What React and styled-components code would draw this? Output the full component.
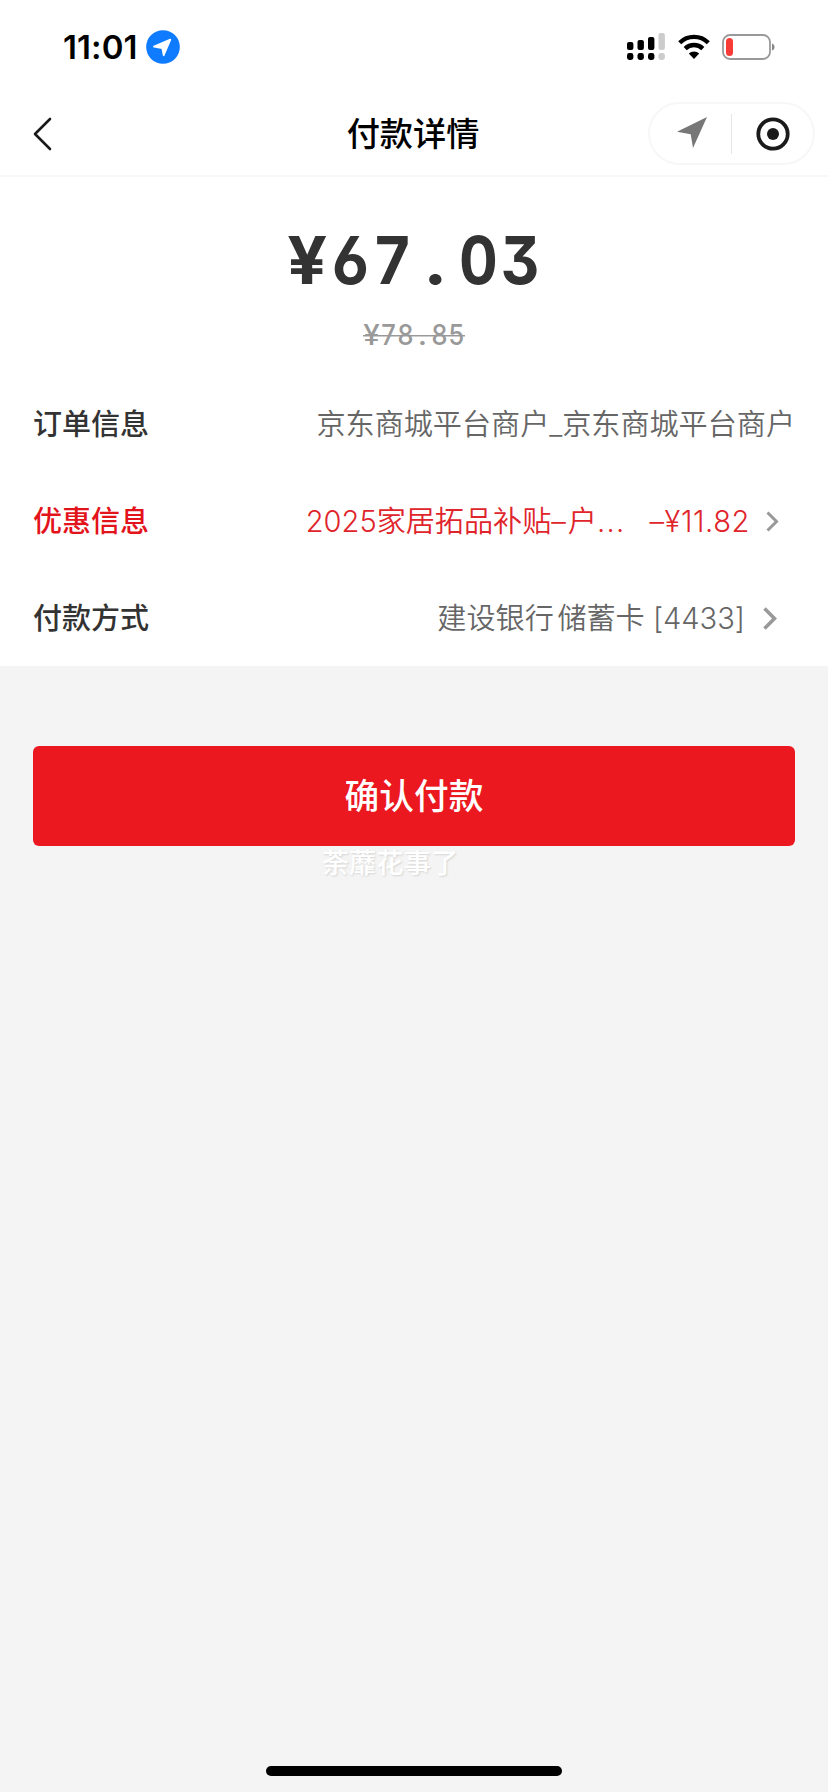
import React from "react";
import styled, { createGlobalStyle } from "styled-components";

const Global = createGlobalStyle`
  * { box-sizing: border-box; }
  body { margin: 0; background: #f4f4f4; font-family: Inter, "Noto Sans CJK SC", sans-serif; }
`;

const Screen = styled.div`
  width: 828px;
  height: 1792px;
  display: flex;
  flex-direction: column;
  background: #f4f4f4;
  overflow: hidden;
`;

const StatusBar = styled.header`
  height: 88px;
  flex: none;
  display: flex;
  align-items: center;
  justify-content: space-between;
  padding: 6px 53px 0 63px;
  background: #fff;
`;

const StatusGroup = styled.div`
  display: flex;
  align-items: center;
  gap: ${(p) => p.$gap}px;
`;

const Clock = styled.span`
  width: 77px;
  font-size: 33px;
  line-height: 40px;
  font-weight: 600;
  letter-spacing: 0.1px;
  color: #000;
`;

const NavBar = styled.nav`
  height: 89px;
  flex: none;
  display: grid;
  grid-template-columns: 180px 1fr 180px;
  align-items: center;
  padding: 4px 13px 0 33px;
  background: #fff;
  border-bottom: 2px solid #f8f8f8;
`;

const Title = styled.h1`
  margin: 0;
  padding: 1px 22px 0 0;
  text-align: center;
  white-space: nowrap;
  font-size: 33.2px;
  line-height: 48px;
  font-weight: 500;
  color: #000;
`;

const Capsule = styled.div`
  justify-self: end;
  width: 167px;
  height: 63px;
  border: 2px solid #f7f7f7;
  border-radius: 32px;
  display: grid;
  grid-template-columns: 1fr 1px 1fr;
  place-items: center;
`;

const CapsuleDivider = styled.span`
  width: 1px;
  height: 40px;
  background: #e6e6e6;
`;

const Details = styled.main`
  height: 489px;
  flex: none;
  background: #fff;
  padding: 47px 33px 0;
  display: flex;
  flex-direction: column;
`;

const Amount = styled.div`
  align-self: center;
  display: flex;
  height: 72px;
  line-height: 72px;
  font-size: 66px;
  font-weight: 750;
  font-feature-settings: "cv09", "cv03", "tnum";
  color: #333;
`;

const OldAmount = styled(Amount)`
  height: 36px;
  line-height: 36px;
  margin-top: 21px;
  font-size: 28px;
  font-weight: 550;
  color: #999;
  background: linear-gradient(#999, #999) 0 18px / 100% 1.5px no-repeat;
`;

const Digit = styled.span`
  width: ${(p) => p.$pitch}px;
  display: flex;
  justify-content: center;
  transform: scaleX(${(p) => p.$stretch});
`;

const Rows = styled.div`
  margin-top: 23px;
`;

const Row = styled.div`
  height: 97px;
  display: flex;
  align-items: center;
  justify-content: space-between;
  padding-right: ${(p) => p.$inset || 0}px;
  font-size: 29px;
  color: ${(p) => (p.$accent ? "#e0242b" : "#666")};
`;

const Label = styled.span`
  padding-bottom: 5px;
  font-weight: 500;
  color: ${(p) => (p.$accent ? "#e3131b" : "#333")};
`;

const Value = styled.span`
  display: flex;
  align-items: center;
`;

const ValueText = styled.span`
  padding-bottom: 5px;
  white-space: pre;
  font-size: 29.1px;
  font-weight: 350;
  font-feature-settings: "calt" 0;
`;

const Bank = styled.span`
  word-spacing: -4.5px;
`;

const Dash = styled.span`
  letter-spacing: 2px;
`;

const Ellipsis = styled.span`
  letter-spacing: 1.3px;
`;

const Discount = styled.span`
  margin-left: 24px;
  letter-spacing: 0.6px;
`;

const Action = styled.section`
  flex: 1;
  display: flex;
  flex-direction: column;
  align-items: center;
  padding: 80px 33px 0;
`;

const ConfirmButton = styled.button`
  width: 100%;
  height: 100px;
  border: 0;
  border-radius: 6px;
  background: #eb1820;
  color: #fff;
  font: 500 34.7px/50px Inter, "Noto Sans CJK SC", sans-serif;
`;

const Signature = styled.p`
  margin: 1px 48px 0 0;
  font-size: 27.3px;
  line-height: 34px;
  font-weight: 500;
  color: #fff;
  text-shadow: 1px 1px 2px rgba(0, 0, 0, 0.13);
`;

const HomeIndicator = styled.div`
  flex: none;
  align-self: center;
  width: 296px;
  height: 10px;
  margin-bottom: 16px;
  border-radius: 5px;
  background: #000;
`;

const Chevron = styled.svg`
  margin-left: ${(p) => p.$gap}px;
  fill: none;
  stroke: #999;
`;

const LocationBadge = () => (
  <svg width="34" height="34" viewBox="0 0 34 34">
    <circle cx="17" cy="17" r="16.8" fill="#0f7bff" />
    <path d="M24.3 9.7 17.7 25.2 16.3 18 8 16.6Z" fill="#fff" stroke="#fff" strokeWidth="1.8" strokeLinejoin="round" />
  </svg>
);

const BARS = [
  { x: 0, y: 9, h: 8 },
  { x: 10.5, y: 7, h: 10 },
  { x: 21, y: 4, h: 13 },
  { x: 31.5, y: 0, h: 17, off: true },
];

const Signal = () => (
  <svg width="38" height="28" viewBox="0 0 38 28">
    {BARS.map((b) => (
      <g key={b.x} fill={b.off ? "#ccc" : "#000"}>
        <rect x={b.x} y={b.y} width="6.4" height={b.h} rx="2" />
        <rect x={b.x} y="20" width="6.4" height="7" rx="2.4" />
      </g>
    ))}
  </svg>
);

const Wifi = () => (
  <svg width="32" height="26" viewBox="0 0 32 26" fill="none" stroke="#000" strokeWidth="4.4">
    <path d="M1.7 8.7a20.4 20.4 0 0 1 28.6 0" />
    <path d="M7.2 14.6a12.6 12.6 0 0 1 17.6 0" />
    <path d="M16 25 10.8 19.6a7.6 7.6 0 0 1 10.4 0Z" fill="#000" stroke="none" />
  </svg>
);

const Battery = () => (
  <svg width="53" height="26" viewBox="0 0 53 26">
    <rect x="1" y="1" width="47" height="24" rx="7" fill="none" stroke="#999" strokeWidth="1.8" />
    <rect x="4" y="4" width="7" height="18" rx="3.5" fill="#f93b36" />
    <path d="M50 9.5c3.4 1 3.4 6 0 7Z" fill="#888" />
  </svg>
);

const BackArrow = () => (
  <svg width="19" height="34" viewBox="0 0 19 34" fill="none" stroke="#1a1a1a" strokeWidth="2.6" strokeLinecap="round" strokeLinejoin="round">
    <path d="M17 2 2 17l15 15" />
  </svg>
);

const Plane = () => (
  <svg width="32" height="33" viewBox="-2 0 32 33">
    <path d="M30 0 16 31 13.7 17.2 0 14.8Z" fill="#777" />
  </svg>
);

const Target = () => (
  <svg width="34" height="34" viewBox="0 0 34 34">
    <circle cx="17" cy="17" r="14.7" fill="none" stroke="#1a1a1a" strokeWidth="3.8" />
    <circle cx="17" cy="17" r="6" fill="#1a1a1a" />
  </svg>
);

const STRETCH = { "¥": 1.06, ".": 1.1 };

const digits = (text, pitch) =>
  [...text].map((c, i) => (
    <Digit key={i} $pitch={pitch} $stretch={STRETCH[c] || 0.91}>
      {c}
    </Digit>
  ));

export default function App() {
  return (
    <Screen>
      <Global />
      <StatusBar>
        <StatusGroup $gap={6}>
          <Clock>11:01</Clock>
          <LocationBadge />
        </StatusGroup>
        <StatusGroup $gap={12.5}>
          <Signal />
          <Wifi />
          <Battery />
        </StatusGroup>
      </StatusBar>
      <NavBar>
        <BackArrow />
        <Title>付款详情</Title>
        <Capsule>
          <Plane />
          <CapsuleDivider />
          <Target />
        </Capsule>
      </NavBar>
      <Details>
        <Amount>{digits("¥67.03", 42.6)}</Amount>
        <OldAmount>{digits("¥78.85", 17)}</OldAmount>
        <Rows>
          <Row>
            <Label>订单信息</Label>
            <Value>
              <ValueText>京东商城平台商户_京东商城平台商户</ValueText>
            </Value>
          </Row>
          <Row $accent $inset={16}>
            <Label $accent>优惠信息</Label>
            <Value>
              <ValueText>
                2025家居拓品补贴<Dash>–</Dash>户<Ellipsis>...</Ellipsis>
                <Discount>–¥11.82</Discount>
              </ValueText>
              <Chevron $gap={16} width="13" height="21" viewBox="0 0 13 21" strokeWidth="3">
                <path d="M1.5 1.5 10.5 10.5l-9 9" />
              </Chevron>
            </Value>
          </Row>
          <Row $inset={18}>
            <Label>付款方式</Label>
            <Value>
              <ValueText>
                <Bank>建设银行 储蓄卡</Bank> [4433]
              </ValueText>
              <Chevron $gap={18} width="14" height="23" viewBox="0 0 14 23" strokeWidth="3.6">
                <path d="M1.5 1.5 11.5 11.5l-10 10" />
              </Chevron>
            </Value>
          </Row>
        </Rows>
      </Details>
      <Action>
        <ConfirmButton>确认付款</ConfirmButton>
        <Signature>荼蘼花事了</Signature>
      </Action>
      <HomeIndicator />
    </Screen>
  );
}
